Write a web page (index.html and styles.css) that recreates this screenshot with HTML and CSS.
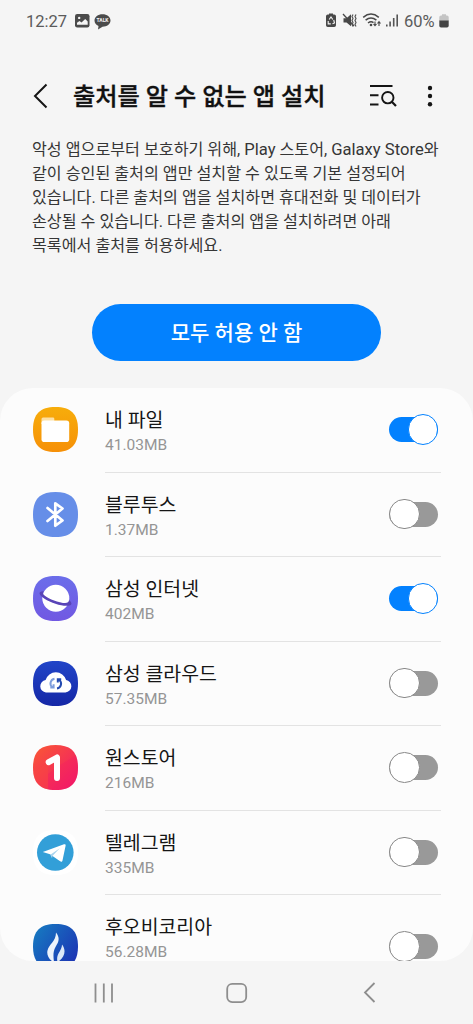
FILE: index.html
```html
<!DOCTYPE html>
<html lang="ko">
<head>
<meta charset="utf-8">
<meta name="viewport" content="width=device-width, initial-scale=1">
<title>출처를 알 수 없는 앱 설치</title>
<link rel="stylesheet" href="styles.css">
</head>
<body>
<svg class="defs" width="0" height="0" aria-hidden="true">
  <defs>
    <path id="squircle" d="M22.5 0C38 0 45 7 45 22.500S38 45 22.500 45 0 38 0 22.500 7 0 22.500 0Z"/>
    <linearGradient id="g-files" x2="0" y2="1"><stop stop-color="#f7ad0b"/><stop offset="1" stop-color="#f69007"/></linearGradient>
    <linearGradient id="g-web" x2="0" y2="1"><stop stop-color="#6b6eea"/><stop offset="1" stop-color="#7158e2"/></linearGradient>
    <linearGradient id="g-cloud" x2="0" y2="1"><stop stop-color="#2145c8"/><stop offset="1" stop-color="#1527a6"/></linearGradient>
    <linearGradient id="g-one" x2="1" y2="1"><stop stop-color="#fa5933"/><stop offset="1" stop-color="#f0146e"/></linearGradient>
    <linearGradient id="g-huobi" x2="1" y2=".7"><stop stop-color="#167fc2"/><stop offset="1" stop-color="#1c36b4"/></linearGradient>
    <clipPath id="sq-clip"><use href="#squircle"/></clipPath>
  </defs>
</svg>
<div class="screen">
  <div class="status">
    <span class="clock">12:27</span>
    <svg class="st-photo" width="15" height="14" viewBox="0 0 15 14"><rect width="14.500" height="13.500" rx="2.200" fill="#4b4b4b"/><path d="M2 10.800V8.800L4.500 7l2 1.400L10.200 5l2.500 2.500v3.300Z" fill="#f5f5f5"/><circle cx="4.200" cy="3.900" r="1.200" fill="#f5f5f5"/></svg>
    <svg class="st-talk" width="17" height="16" viewBox="0 0 17 16"><path d="M8.500.3C13 .3 16.500 3 16.500 6.500S13 12.700 8.500 12.700L4 15.500l.5-3.600C2 10.800.5 8.800.5 6.500.5 3 4 .3 8.500.3Z" fill="#4b4b4b"/><text x="8.500" y="8.400" text-anchor="middle" class="talk-text">TALK</text></svg>
    <span class="grow"></span>
    <svg class="st-right" width="74" height="16" viewBox="0 0 74 16">
      <path d="M3 1.500V.5h4v1h1.200q1.800 0 1.800 1.800v8.900q0 1.800-1.800 1.800H1.800Q0 14 0 12.200V3.300Q0 1.500 1.800 1.500Z" fill="#484848"/>
      <path d="M3.200 6.500 5 4l1.800 2.500M7.700 7l.8 3-2 .8M4.800 10.900H2.200L2.200 8" fill="none" stroke="#f5f5f5" stroke-width="1.100"/>
      <path d="M17.500 5.200h3L25 1.200v12l-4.500-3.800h-3Z" fill="#484848"/>
      <path d="M17 1l11 12" stroke="#484848" stroke-width="1.300"/>
      <path d="M27 1.500l-1 2 1 2-1 2 1 2-1 2 1 2M30 1.500l-1 2 1 2-1 2 1 2-1 2 1 2" fill="none" stroke="#555" stroke-width="1.200"/>
      <path d="M37.200 4.300q7.800-6.500 15.600 0M39.600 7.200q5.400-4.500 10.800 0M42 10q3-2.200 5.500-.3" fill="none" stroke="#484848" stroke-width="1.500"/>
      <circle cx="45" cy="12" r="1.300" fill="#484848"/>
      <path d="M49 8.500v4M47.500 11 49 12.700 50.500 11M53 13V9M51.500 10.500 53 8.700l1.500 1.800" fill="none" stroke="#484848" stroke-width="1.100"/>
      <path d="M60.800 13.500v-2M64.100 13.500v-5M67.700 13.500V5M71.200 13.500V1.500" stroke="#555" stroke-width="1.600"/>
    </svg>
    <span class="percent">60%</span>
    <svg class="st-battery" width="10" height="14" viewBox="0 0 10 14"><path d="M3 1.500V.3h4v1.200h1q1.700 0 1.700 1.700V7H.3V3.200Q.3 1.500 2 1.500Z" fill="#c4c4c4"/><path d="M.3 6.500h9.400v5.300q0 1.700-1.700 1.700H2Q.3 13.500.3 11.800Z" fill="#444"/></svg>
  </div>

  <header class="appbar">
    <svg class="back" width="15" height="26" viewBox="0 0 15 26"><path d="M13.500 1.500 2 13l11.500 11.500" fill="none" stroke="#151515" stroke-width="2"/></svg>
    <h1>출처를 알 수 없는 앱 설치</h1>
    <span class="grow"></span>
    <svg class="search" width="28" height="24" viewBox="0 0 28 24"><path d="M1 2h22.500M1 11.300h8.500M1 20.500h8.500" stroke="#151515" stroke-width="1.900"/><circle cx="18.800" cy="13.700" r="5.700" fill="none" stroke="#151515" stroke-width="1.900"/><path d="m22.800 17.800 4.200 4.300" stroke="#151515" stroke-width="2.200"/></svg>
    <svg class="more" width="6" height="22" viewBox="0 0 6 22"><g fill="#151515"><circle cx="3" cy="3" r="2.200"/><circle cx="3" cy="11" r="2.200"/><circle cx="3" cy="19.200" r="2.200"/></g></svg>
  </header>

  <p class="description">악성 앱으로부터 보호하기 위해, <span class="latin">Play</span> 스토어, <span class="latin">Galaxy Store</span>와<br>같이 승인된 출처의 앱만 설치할 수 있도록 기본 설정되어<br>있습니다. 다른 출처의 앱을 설치하면 휴대전화 및 데이터가<br>손상될 수 있습니다. 다른 출처의 앱을 설치하려면 아래<br>목록에서 출처를 허용하세요.</p>

  <button class="deny">모두 허용 안 함</button>

  <main class="list">
    <div class="row">
      <svg class="icon" viewBox="0 0 45 45"><use href="#squircle" fill="url(#g-files)"/><path d="M8.500 17v-5q0-1.500 1.500-1.500h10q1.300 0 1.300 1.300V17Z" fill="#fde0a4"/><rect x="8.500" y="13.500" width="27.700" height="21.500" rx="2.800" fill="#fff"/></svg>
      <div class="body"><div class="text"><div class="name">내 파일</div><div class="size">41.03MB</div></div><span class="switch on"></span></div>
    </div>
    <div class="row">
      <svg class="icon" viewBox="0 0 45 45"><use href="#squircle" fill="#668ee8"/><path d="m14.500 16 15 12.500-7.200 5.200V11.300l7.200 5.200L14.500 29" fill="none" stroke="#fff" stroke-width="2.700" stroke-linejoin="round" stroke-linecap="round"/></svg>
      <div class="body"><div class="text"><div class="name">블루투스</div><div class="size">1.37MB</div></div><span class="switch"></span></div>
    </div>
    <div class="row">
      <svg class="icon" viewBox="0 0 45 45"><use href="#squircle" fill="url(#g-web)"/><circle cx="22.800" cy="22.300" r="13.500" fill="#fff"/><path d="M10.800 15.300C4.500 15 5.500 19 11.500 22.700 19 27.500 31 31 36.500 29.500 39.500 28.700 39 26.500 36 24 36 26.500 34 27.500 30 26.900 22 25.500 13.500 22 10.500 18.500 9.800 17.500 10 16.300 10.800 15.300Z" fill="#5944b7"/></svg>
      <div class="body"><div class="text"><div class="name">삼성 인터넷</div><div class="size">402MB</div></div><span class="switch on"></span></div>
    </div>
    <div class="row">
      <svg class="icon" viewBox="0 0 45 45"><use href="#squircle" fill="url(#g-cloud)"/><path d="M13 31.500a6.300 6.300 0 0 1-.4-12.500 10.700 10.700 0 0 1 20.500 0 6.300 6.300 0 0 1-.6 12.500Z" fill="#fff"/><path d="M21.500 17.700a4.800 4.800 0 0 0-2.200 8.500M17.300 26.600h3.300v-3.300" fill="none" stroke="#7e9ddc" stroke-width="2"/><path d="M24 27.500a4.800 4.800 0 0 0 2-8.700M28.200 18.200h-3.400v3.400" fill="none" stroke="#244bb1" stroke-width="2"/></svg>
      <div class="body"><div class="text"><div class="name">삼성 클라우드</div><div class="size">57.35MB</div></div><span class="switch"></span></div>
    </div>
    <div class="row">
      <svg class="icon" viewBox="0 0 45 45"><use href="#squircle" fill="url(#g-one)"/><g clip-path="url(#sq-clip)"><path d="M0 28 15 17v28H0Z" fill="#fa493f" opacity=".4"/><path d="M27 20 45 9v36H15V29l12-9Z" fill="#f51965" opacity=".3"/></g><path d="M15.700 17.200 24 12.500V33" fill="none" stroke="#fff" stroke-width="6" stroke-linejoin="round" stroke-linecap="round"/></svg>
      <div class="body"><div class="text"><div class="name">원스토어</div><div class="size">216MB</div></div><span class="switch"></span></div>
    </div>
    <div class="row">
      <svg class="icon" viewBox="0 0 45 45"><use href="#squircle" fill="#fff"/><circle cx="22.300" cy="22.500" r="18.300" fill="#329fd8"/><path d="M9.800 22.100 31 14.300c1.200-.4 1.900.2 1.600 1.500L29.500 30.500c-.3 1.400-1.300 1.600-2.400.8L17 24.300Z" fill="#fff"/><path d="m17.300 24.700 9.500-6.400-7.200 7.500-.6 2.500Z" fill="#a8d4ee"/></svg>
      <div class="body"><div class="text"><div class="name">텔레그램</div><div class="size">335MB</div></div><span class="switch"></span></div>
    </div>
    <div class="row tall">
      <svg class="icon" viewBox="0 0 45 45"><use href="#squircle" fill="url(#g-huobi)"/><path d="M23 8.500c4.500 6 2.500 9.500-.5 14.500-2.500 4.500-2.300 9-1.500 15-5.500-2-7.500-7.500-6.500-11.500 1.500-6.500 8.500-9 8.500-18Z" fill="#edf3fb"/><path d="M29 20.500c4 4.500 3.800 13-4.500 17.500-2-8 4.500-11 4.500-17.500Z" fill="#dce8f7"/></svg>
      <div class="body"><div class="text"><div class="name">후오비코리아</div><div class="size">56.28MB</div></div><span class="switch"></span></div>
    </div>
  </main>

  <nav class="navbar">
    <svg width="20" height="20" viewBox="0 0 20 20"><path d="M1.500.5v19M9.800.5v19M18 .5v19" stroke="#8e8e8e" stroke-width="1.800"/></svg>
    <svg class="home" width="22" height="20" viewBox="0 0 22 20"><rect x="1.200" y=".9" width="19" height="18.200" rx="5" fill="none" stroke="#8e8e8e" stroke-width="1.800"/></svg>
    <svg width="13" height="21" viewBox="0 0 13 21"><path d="M11.500 1 2 10.500l9.500 9.500" fill="none" stroke="#8e8e8e" stroke-width="1.800"/></svg>
  </nav>
</div>
</body>
</html>
```
FILE: styles.css
```css
* { box-sizing: border-box; }

body {
  margin: 0;
  background: #f5f5f5;
  font-family: Roboto, "Noto Sans CJK KR", sans-serif;
}

svg { display: block; flex: none; }
.defs { position: absolute; }
.grow { flex: 1; }

.screen {
  display: flex;
  flex-direction: column;
  width: 473px;
  height: 1024px;
  overflow: hidden;
}

.status {
  display: flex;
  align-items: center;
  height: 42px;
  padding: 0 24px 0 26px;
  color: #5b5b5b;
  font-size: 16.500px;
  line-height: 42px;
}
.clock { width: 49px; padding-top: 1px; }
.st-talk { margin: 1px 0 0 4px; }
.talk-text { font: 700 5px Roboto, sans-serif; fill: #f5f5f5; }
.st-right { margin-right: 4px; }
.percent { width: 35px; padding-top: 1px; white-space: nowrap; }

.appbar {
  display: flex;
  align-items: center;
  height: 96px;
  padding: 12px 40px 0 33px;
}
.appbar h1 {
  margin: 2px 0 0 25px;
  font-size: 24.200px;
  font-weight: 500;
  line-height: 36px;
  color: #111;
  -webkit-text-stroke: .35px #111;
  white-space: nowrap;
}
.search { margin-right: 30px; }

.description {
  margin: 0;
  padding-left: 32px;
  height: 166px;
  font-size: 16.150px;
  line-height: 24.100px;
  color: #363636;
  white-space: nowrap;
}
.latin { font-size: 16.600px; line-height: 1; }

.deny {
  flex: none;
  align-self: center;
  width: 289px;
  height: 57px;
  padding: 2px 0 0;
  border: 0;
  border-radius: 29px;
  background: #0381fe;
  color: #fff;
  font: 500 21px/55px Roboto, "Noto Sans CJK KR", sans-serif;
}

.list {
  flex: none;
  height: 573px;
  margin-top: 27px;
  overflow: hidden;
  border-radius: 33px;
  background: #fcfcfc;
}
.row {
  display: flex;
  height: 84.500px;
  padding-left: 33px;
}
.icon {
  width: 45px;
  height: 45px;
  margin: 19px 27px 0 0;
}
.body {
  display: flex;
  justify-content: space-between;
  width: 336px;
  border-bottom: 1px solid #e3e3e3;
}
.text { padding-top: 19px; white-space: nowrap; }
.name {
  font-size: 19.400px;
  line-height: 28px;
  color: #151515;
}
.size {
  font-size: 15.500px;
  line-height: 20px;
  color: #959595;
}

.switch {
  display: flex;
  align-items: center;
  width: 49px;
  height: 25px;
  margin: 29px 3px 0 0;
  border-radius: 13px;
  background: #999;
}
.switch::before {
  content: "";
  width: 28.500px;
  height: 28.500px;
  flex: none;
  border: 1px solid #888;
  border-radius: 50%;
  background: #fff;
}
.switch.on { justify-content: flex-end; background: #0381fe; }
.switch.on::before { border-color: #0381fe; }

.tall { height: 104px; }
.tall .icon { margin-top: 29px; }
.tall .switch { margin-top: 39px; }

.navbar {
  display: flex;
  justify-content: space-between;
  align-items: center;
  height: 63px;
  padding: 0 97px 0 94px;
}
.home { margin-right: 4px; }
```
